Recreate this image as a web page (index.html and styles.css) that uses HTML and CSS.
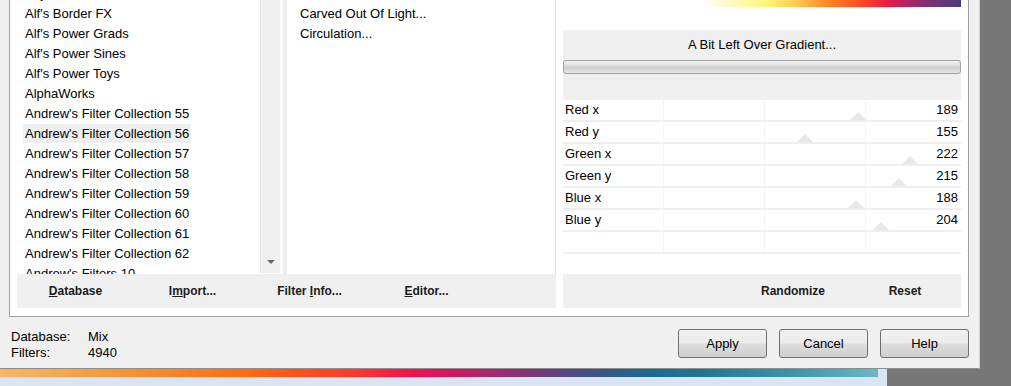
FILE: index.html
```html
<!DOCTYPE html>
<html lang="en">
<head>
    <meta charset="UTF-8">
    <title>Filters Unlimited</title>
    <link rel="stylesheet" href="styles.css">
</head>
<body>

    <div class="screen">
        <div class="dialog">
            <div class="group">
                <div class="filters">
                    <div class="lists">
                        <div class="category-list">
                            <ul class="items">
                                <li><span>Adjust</span></li>
                                <li><span>Alf's Border FX</span></li>
                                <li><span>Alf's Power Grads</span></li>
                                <li><span>Alf's Power Sines</span></li>
                                <li><span>Alf's Power Toys</span></li>
                                <li><span>AlphaWorks</span></li>
                                <li><span>Andrew's Filter Collection 55</span></li>
                                <li class="selected"><span>Andrew's Filter Collection 56</span></li>
                                <li><span>Andrew's Filter Collection 57</span></li>
                                <li><span>Andrew's Filter Collection 58</span></li>
                                <li><span>Andrew's Filter Collection 59</span></li>
                                <li><span>Andrew's Filter Collection 60</span></li>
                                <li><span>Andrew's Filter Collection 61</span></li>
                                <li><span>Andrew's Filter Collection 62</span></li>
                                <li><span>Andrew's Filters 10</span></li>
                            </ul>
                            <div class="scrollbar"><span class="arrow-down"></span></div>
                        </div>
                        <div class="filter-list">
                            <ul class="items">
                                <li><span>Carved Out Of Light...</span></li>
                                <li><span>Circulation...</span></li>
                            </ul>
                        </div>
                    </div>
                    <div class="bar">
                        <span class="bar-btn"><u>D</u>atabase</span>
                        <span class="bar-btn">I<u>m</u>port...</span>
                        <span class="bar-btn">Filter <u>I</u>nfo...</span>
                        <span class="bar-btn"><u>E</u>ditor...</span>
                    </div>
                </div>

                <div class="controls">
                    <div class="preview"></div>
                    <div class="title-box">
                        <div class="title">A Bit Left Over Gradient...</div>
                        <div class="trough"></div>
                    </div>
                    <div class="sliders">
                        <div class="slider-row"><span class="thumb" style="left: 74.1%"></span><span class="label">Red x</span><span class="value">189</span></div>
                        <div class="slider-row"><span class="thumb" style="left: 60.8%"></span><span class="label">Red y</span><span class="value">155</span></div>
                        <div class="slider-row"><span class="thumb" style="left: 87.1%"></span><span class="label">Green x</span><span class="value">222</span></div>
                        <div class="slider-row"><span class="thumb" style="left: 84.3%"></span><span class="label">Green y</span><span class="value">215</span></div>
                        <div class="slider-row"><span class="thumb" style="left: 73.7%"></span><span class="label">Blue x</span><span class="value">188</span></div>
                        <div class="slider-row"><span class="thumb" style="left: 80%"></span><span class="label">Blue y</span><span class="value">204</span></div>
                        <div class="slider-row empty"></div>
                    </div>
                    <div class="bar right-bar">
                        <span class="bar-btn">Randomize</span>
                        <span class="bar-btn">Reset</span>
                    </div>
                </div>
            </div>

            <div class="footer">
                <div class="info">
                    <div class="info-row"><span class="info-key">Database:</span><span>Mix</span></div>
                    <div class="info-row"><span class="info-key">Filters:</span><span>4940</span></div>
                </div>
                <div class="actions">
                    <button class="btn">Apply</button>
                    <button class="btn">Cancel</button>
                    <button class="btn">Help</button>
                </div>
            </div>
        </div>

        <div class="behind"><div class="behind-strip"></div></div>
    </div>

</body>
</html>
```

FILE: styles.css
```css
body {
    margin: 0;
    background: #777777;
    font-family: 'Liberation Sans', Arial, sans-serif;
    font-size: 13px;
    color: #000000;
    overflow: hidden;
}

.screen {
    width: 1011px;
    height: 386px;
}

.dialog {
    box-sizing: border-box;
    width: 980px;
    height: 369px;
    background: #f0f0f0;
    border-right: 1px solid #d2d2d2;
    border-bottom: 1px solid #8e8e8e;
}

.group {
    box-sizing: border-box;
    display: flex;
    gap: 7px;
    margin-left: 9px;
    width: 960px;
    height: 317px;
    padding: 0 7px 8px 7px;
    background: #ffffff;
    border: 1px solid #a0a0a0;
    border-top: none;
}

/* left side: two lists and their button bar */
.filters {
    width: 539px;
    display: flex;
    flex-direction: column;
}

.lists {
    height: 274px;
    display: flex;
}

.items {
    list-style: none;
    margin: 0;
    padding: 0;
}

.items li {
    height: 20px;
    line-height: 20px;
    white-space: nowrap;
}

.items span {
    display: inline-block;
    padding: 0 2px;
    height: 19px;
}

.items .selected span {
    background: #efefef;
}

.category-list {
    width: 263px;
    display: flex;
    overflow: hidden;
}

.category-list .items {
    width: 243px;
    margin-top: -16px;
    padding-left: 6px;
    box-sizing: border-box;
}

.scrollbar {
    width: 20px;
    height: 273px;
    box-sizing: border-box;
    background: #f0f0f0;
    border-left: 1px solid #e8e8e8;
    display: flex;
    align-items: flex-end;
    justify-content: center;
}

.arrow-down {
    width: 0;
    height: 0;
    border-left: 4px solid transparent;
    border-right: 4px solid transparent;
    border-top: 4px solid #6a6a6a;
    margin-bottom: 9px;
}

.filter-list {
    box-sizing: border-box;
    width: 273px;
    margin-left: 3px;
    padding: 4px 0 0 11px;
    border-left: 4px solid #efefef;
    border-right: 1px solid #dedede;
}

.bar {
    height: 34px;
    display: flex;
    background: #f0f0f0;
    font-size: 12px;
    font-weight: bold;
    line-height: 34px;
    color: #1b1b1b;
}

.bar-btn {
    width: 117px;
    text-align: center;
}

/* right side: gradient settings */
.controls {
    width: 398px;
    display: flex;
    flex-direction: column;
}

.preview {
    height: 7px;
    background: linear-gradient(to right, #ffffff 0%, #ffffff 35%, #fffbd6 40%, #fff67a 51%, #ffc850 59%, #ff8a28 66%, #ff4a20 75%, #e8184a 82%, #8a2e6e 90%, #4a3c80 100%);
}

.title-box {
    box-sizing: border-box;
    height: 70px;
    margin-top: 23px;
    padding-top: 5px;
    background: #f0f0f0;
}

.title {
    line-height: 20px;
    text-align: center;
}

.trough {
    box-sizing: border-box;
    height: 14px;
    margin-top: 5px;
    border: 1px solid #a2a2a2;
    border-radius: 3px;
    background: linear-gradient(#f6f6f6, #e0e0e0 35%, #cdcdcd 55%, #dcdcdc 80%, #e8e8e8);
}

.sliders {
    background-image: repeating-linear-gradient(to right, transparent 0 100px, #f5f5f5 100px 101px);
}

.slider-row {
    position: relative;
    display: flex;
    justify-content: space-between;
    height: 20px;
    line-height: 20px;
    padding: 0 3px 0 2px;
    border-bottom: 2px solid #eeeeee;
}

.slider-row span {
    position: relative;
}

.slider-row .thumb {
    position: absolute;
    bottom: 0;
    width: 0;
    height: 0;
    transform: translateX(-50%);
    border-left: 8px solid transparent;
    border-right: 8px solid transparent;
    border-bottom: 8px solid #e8e8e8;
}

.right-bar {
    margin-top: auto;
    justify-content: flex-end;
}

.right-bar .bar-btn {
    width: 112px;
}

/* bottom of the dialog */
.footer {
    display: flex;
    justify-content: space-between;
    padding: 12px 10px 0 11px;
}

.info-row {
    line-height: 16px;
}

.info-key {
    display: inline-block;
    width: 77px;
}

.actions {
    display: flex;
    gap: 12px;
}

.btn {
    width: 89px;
    height: 29px;
    padding: 0;
    font-family: inherit;
    font-size: 13px;
    color: #000000;
    border: 1px solid #707070;
    border-radius: 3px;
    background: linear-gradient(#f2f2f2, #ebebeb 48%, #dddddd 52%, #cfcfcf);
}

/* window peeking out below */
.behind {
    width: 887px;
    height: 17px;
    background: #dbe5f1;
}

.behind-strip {
    width: 878px;
    height: 8px;
    background: linear-gradient(to right, #f7b868 0%, #f59a3a 12%, #ff6a12 28%, #ff3a28 40%, #f4164a 46%, #e0125a 50%, #b02468 55%, #763878 61%, #3c5288 68%, #1a6a90 74%, #1c7892 80%, #3a9aaa 91%, #6ab8c8 100%);
}
```
